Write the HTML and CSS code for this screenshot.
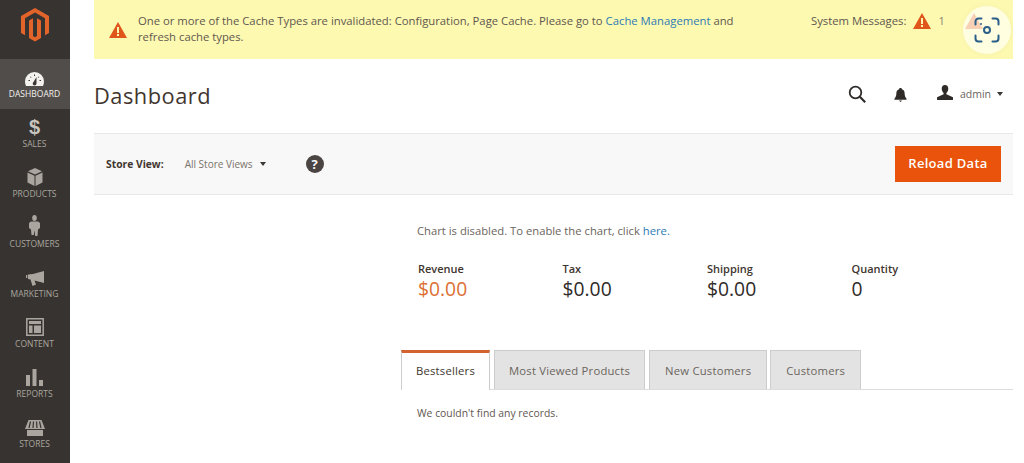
FILE: index.html
```html
<!DOCTYPE html>
<html lang="en">
<head>
<meta charset="utf-8">
<title>Dashboard</title>
<link rel="stylesheet" href="styles.css">
</head>
<body>
<div class="app">
  <nav class="sidebar">
    <div class="logo">
      <svg width="30" height="34" viewBox="0 0 30 34"><path fill="#e2642a" d="M15 0 29 8v17l-4 2.300V10.300L15 4.500 5 10.300V27.300L1 25V8z"/><path fill="#e2642a" d="M9 12.500 13 10.200V28l2 1.200 2-1.200V10.200l4 2.300V30l-6 3.600L9 30z"/></svg>
    </div>
    <a class="nav-item active">
      <svg class="nav-icon" width="19" height="14" viewBox="0 0 19 14"><path fill="#f4f2ee" d="M9.500 0a9.500 9.500 0 0 1 9.500 9.500c0 1.600-.3 3.200-1 4.500H1c-.7-1.300-1-2.900-1-4.500A9.500 9.500 0 0 1 9.500 0z"/><path fill="#3a3633" d="M11.500 5 8.500 10a1.900 1.900 0 1 0 3 1.200zM3.500 8h1.500v1H3.500zM5.500 4.500l1 .7-.5.6-1-.7zM9 2.500h1v1.500H9zM13.500 4.500l.8.6-1 .7-.5-.6zM14.500 8H16v1h-1.500z"/></svg>
      <span>DASHBOARD</span>
    </a>
    <a class="nav-item">
      <span class="dollar">$</span>
      <span>SALES</span>
    </a>
    <a class="nav-item">
      <svg class="nav-icon" width="16" height="18" viewBox="0 0 16 18"><path fill="#aaa69f" d="M8 0l7 3.200L8 6.500 1 3.200z"/><path fill="#aaa69f" d="M.5 4.500l7 3.300V18l-7-3.500z"/><path fill="#aaa69f" d="M15.500 4.500l-7 3.300V18l7-3.500z"/></svg>
      <span>PRODUCTS</span>
    </a>
    <a class="nav-item">
      <svg class="nav-icon" width="11" height="21" viewBox="0 0 11 21"><ellipse cx="5.500" cy="3" rx="2.300" ry="3" fill="#aaa69f"/><path fill="#aaa69f" d="M2 6.500h7l2 1.500v5l-2 1.500-.5 6.500H6.200L5.500 15l-.7 5H2.500L2 14.500 0 13V8z"/></svg>
      <span>CUSTOMERS</span>
    </a>
    <a class="nav-item">
      <svg class="nav-icon" width="18" height="15" viewBox="0 0 18 15"><path fill="#aaa69f" d="M18 0v12L8.500 9.500l1.500 4-3.500 1.500-2-6.500-2.500-.5V3.500L7 3z"/><path fill="#aaa69f" d="M0 4h1.300v3H0z"/></svg>
      <span>MARKETING</span>
    </a>
    <a class="nav-item">
      <svg class="nav-icon" width="18" height="18" viewBox="0 0 18 18"><path fill="none" stroke="#aaa69f" stroke-width="1.500" d="M.8.800h16.400v16.400H.8z"/><path fill="#aaa69f" d="M3 3h12v3H3zM3 7.500h3.500V15H3zM8 7.500h7V15H8z"/></svg>
      <span>CONTENT</span>
    </a>
    <a class="nav-item">
      <svg class="nav-icon" width="17" height="17" viewBox="0 0 17 17"><path fill="#aaa69f" d="M0 6h4v11H0zM6.500 0h4v17h-4zM13 11h4v6h-4z"/></svg>
      <span>REPORTS</span>
    </a>
    <a class="nav-item">
      <svg class="nav-icon" width="20" height="16" viewBox="0 0 20 16"><path fill="#aaa69f" d="M3.500 0h13L20 9H0zM2 10h16v6H2z"/><path stroke="#373330" stroke-width="1.200" d="M5.500 1.500 4 8M8.500 1.500 8 8M11.500 1.500 12 8M14.500 1.500 16 8"/></svg>
      <span>STORES</span>
    </a>
  </nav>
  <main class="main">
    <div class="banner">
      <div class="notice">
        <svg class="warn" width="18" height="16" viewBox="0 0 18 16"><path fill="#e0561a" d="M9 0l9 16H0z"/><path fill="#fdf8b0" d="M8 5h2v6H8zM8 12h2v2H8z"/></svg>
        <p class="notice-text">One or more of the Cache Types are invalidated: Configuration, Page Cache. Please go to <a class="link">Cache Management</a> and refresh cache types.</p>
      </div>
      <div class="sys">
        <span>System Messages:</span>
        <svg class="sys-warn" width="18" height="16" viewBox="0 0 18 16"><path fill="#e0561a" d="M9 0l9 16H0z"/><path fill="#fdf8b0" d="M8 5h2v6H8zM8 12h2v2H8z"/></svg>
        <span class="sys-count">1</span>
        <svg class="ghost" width="18" height="16" viewBox="0 0 18 16"><path fill="#e0561a" d="M9 0l9 16H0z"/></svg>
      </div>
    </div>
    <header class="page-head">
      <h1>Dashboard</h1>
      <div class="actions">
        <svg class="search" width="18" height="18" viewBox="0 0 18 18"><circle cx="7.500" cy="7.500" r="5.800" fill="none" stroke="#2f2b28" stroke-width="1.800"/><path stroke="#2f2b28" stroke-width="2.200" d="m11.800 11.800 5.400 5.400"/></svg>
        <svg class="bell" width="13" height="14" viewBox="0 0 14 15"><path fill="#2f2b28" d="M7 0c1 0 1.500.6 1.500 1.300C11 2 11.500 4 11.500 6.500c0 2.500 1 3.800 2 5v1H.5v-1c1-1.200 2-2.500 2-5C2.500 4 3 2 5.500 1.300 5.500.6 6 0 7 0zM5.300 13.300h3.400L7 15z"/></svg>
        <svg class="user" width="16" height="15" viewBox="0 0 17 16"><path fill="#2f2b28" d="M8.500 0c2.300 0 3.500 1.700 3.500 4 0 2-1 3.500-2 4.500v1.300L17 13v3H0v-3l7-3.200V8.500C6 7.500 5 6 5 4c0-2.300 1.200-4 3.500-4z"/></svg>
        <span class="admin">admin</span>
        <span class="caret"></span>
      </div>
    </header>
    <section class="toolbar">
      <div class="scope">
        <b class="scope-label">Store View:</b>
        <span class="scope-value">All Store Views</span>
        <span class="caret"></span>
        <span class="help">?</span>
      </div>
      <button class="reload">Reload Data</button>
    </section>
    <section class="content">
      <p class="chart-note">Chart is disabled. To enable the chart, click <a class="link">here.</a></p>
      <div class="totals">
        <div class="total"><span class="total-label">Revenue</span><span class="total-value accent">$0.00</span></div>
        <div class="total"><span class="total-label">Tax</span><span class="total-value">$0.00</span></div>
        <div class="total"><span class="total-label">Shipping</span><span class="total-value">$0.00</span></div>
        <div class="total"><span class="total-label">Quantity</span><span class="total-value">0</span></div>
      </div>
      <div class="tabs">
        <a class="tab current">Bestsellers</a>
        <a class="tab">Most Viewed Products</a>
        <a class="tab tab-new">New Customers</a>
        <a class="tab tab-last">Customers</a>
      </div>
      <p class="empty">We couldn't find any records.</p>
    </section>
  </main>
</div>
<div class="lens">
  <svg width="26" height="26" viewBox="0 0 26 26"><path fill="none" stroke="#2b5f8a" stroke-width="2" stroke-linecap="round" d="M1.500 7.500V4.500a3 3 0 0 1 3-3h3M18.500 1.500h3a3 3 0 0 1 3 3v3M24.500 18.500v3a3 3 0 0 1-3 3h-3M7.500 24.500h-3a3 3 0 0 1-3-3v-3"/><circle cx="13" cy="13" r="3" fill="none" stroke="#2b5f8a" stroke-width="2"/><circle cx="7" cy="7" r="1" fill="#2b5f8a"/></svg>
</div>
</body>
</html>
```

FILE: styles.css
```css
* { box-sizing: border-box; }
html, body { margin: 0; height: 463px; overflow: hidden; background: #fff; }
body { font-family: "Open Sans", sans-serif; color: #41362f; position: relative; }
.app { display: flex; height: 463px; }

.sidebar { width: 70px; flex: none; background: #373330; display: flex; flex-direction: column; padding-right: 1px; }
.logo { height: 59px; display: flex; justify-content: center; padding-top: 8px; }
.nav-item { height: 50px; display: flex; flex-direction: column; align-items: center; justify-content: flex-end; padding-bottom: 9px; color: #aaa69f; font-size: 8.500px; line-height: 12px; }
.nav-item.active { background: #514d4a; color: #f4f2ee; margin-right: -1px; padding-right: 1px; }
.nav-icon { margin-bottom: 2px; }
.dollar { font-size: 20px; line-height: 20px; font-weight: 700; color: #c8c5bf; font-family: "Liberation Sans", sans-serif; margin-bottom: 1px; }

.main { flex: 1; padding: 0 11px 0 24px; min-width: 0; }
.banner { height: 59px; background: #fdf9b1; display: flex; justify-content: space-between; font-size: 11.300px; line-height: 16px; color: #5f574f; }
.notice { display: flex; align-items: center; width: 660px; padding-left: 15px; padding-bottom: 1px; }
.warn { flex: none; margin-right: 11px; margin-top: 1px; }
.notice-text { margin: 0; width: 620px; }
.link { color: #2d7ab5; }
.sys { display: flex; align-items: flex-start; padding-top: 13px; width: 202px; font-size: 11.300px; }
.sys-warn { margin: 0 0 0 7px; flex: none; }
.sys-count { margin-left: 7px; color: #8a8378; font-size: 11px; }
.ghost { margin-left: 20px; flex: none; }

.page-head { height: 74px; display: flex; justify-content: space-between; align-items: center; padding-bottom: 4px; }
h1 { margin: 3px 0 0; font-size: 21.800px; font-weight: 400; letter-spacing: .5px; color: #41362f; }
.actions { display: flex; align-items: center; padding-right: 10px; }
.search { margin-right: 28px; margin-left: -2px; }
.bell { margin-right: 30px; margin-top: 1px; }
.user { margin-right: 7px; margin-bottom: 3px; }
.admin { font-size: 10.500px; color: #6b655d; margin-right: 6px; margin-bottom: 1px; }
.caret { display: inline-block; width: 0; height: 0; border: 3.500px solid transparent; border-top: 4px solid #3b3632; border-bottom: 0; }

.toolbar { height: 62px; background: #f8f8f8; border-top: 1px solid #e8e8e8; border-bottom: 1px solid #e8e8e8; display: flex; justify-content: space-between; align-items: center; padding: 0 12px; }
.scope { display: flex; align-items: center; }
.scope-label { font-size: 10.300px; font-weight: 700; color: #41362f; margin-right: 21px; }
.scope-value { font-size: 10px; color: #7a7369; margin-right: 7px; }
.help { width: 18px; height: 18px; border-radius: 50%; background: #4a4542; color: #f8f8f8; font-size: 13px; font-weight: 700; text-align: center; line-height: 18px; margin-left: 40px; }
.reload { width: 106px; height: 36px; background: #e9530b; border: 0; color: #fff; font: 600 13px "Open Sans", sans-serif; letter-spacing: .3px; padding: 0 0 2px; }

.content { padding: 27px 0 0 323px; }
.chart-note { margin: 0; font-size: 11.250px; line-height: 17px; color: #6b655d; }
.totals { display: flex; margin-top: 22px; padding-left: 1px; }
.total { width: 144.500px; display: flex; flex-direction: column; }
.total-label { font-size: 11px; line-height: 15px; font-weight: 600; color: #41362f; }
.total-value { font-size: 19.300px; line-height: 26px; color: #2f2b28; }
.accent { color: #dc6f34; }

.tabs { display: flex; gap: 4px; margin-top: 48px; margin-left: -16px; border-bottom: 1px solid #dcdcdc; height: 40px; }
.tab { height: 39px; background: #e3e3e3; border: 1px solid #cccccc; border-bottom: 0; font-size: 11.300px; color: #6b655d; line-height: 40px; text-align: center; letter-spacing: .2px; padding: 0 14px; }
.tab-new { padding: 0 15px; margin-right: -1px; }
.tab-last { padding: 0 15px; }
.tab.current { background: #fff; border-top: 3px solid #d2622e; height: 40px; color: #41362f; line-height: 36px; width: 89px; padding: 0; }
.empty { margin: 16px 0 0; font-size: 10.400px; line-height: 14px; color: #5f574f; }

.lens { position: absolute; left: 963px; top: 6px; width: 48px; height: 48px; border-radius: 50%; background: rgba(255,255,242,.72); display: flex; align-items: center; justify-content: center; box-shadow: 0 0 6px rgba(0,0,0,.04); }
```
